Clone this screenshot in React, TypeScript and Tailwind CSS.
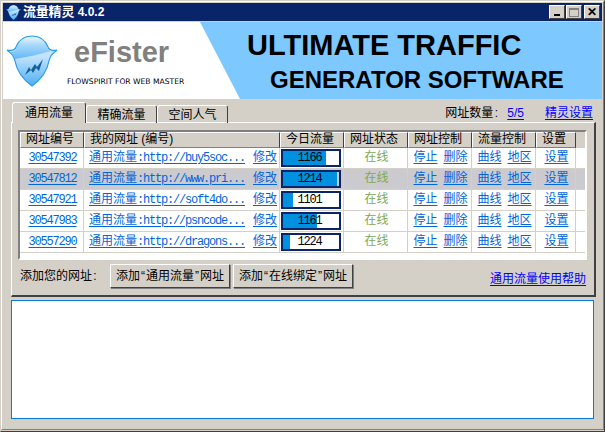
import React from 'react'

const cjk = "font-['Liberation_Sans','Noto_Sans_CJK_SC',sans-serif]"
const mono = "font-['Liberation_Mono','Noto_Sans_CJK_SC',monospace] text-[12px] tracking-[-1.2px]"
const grid = 'grid grid-cols-[64px_196px_64px_64px_64px_64px_40px_1fr]'

const rows = [
  { id: '30547392', url: 'http://buy5soc...', today: 1166, fill: 43, on: false },
  { id: '30547812', url: 'http://www.pri...', today: 1214, fill: 54, on: true },
  { id: '30547921', url: 'http://soft4do...', today: 1101, fill: 10, on: false },
  { id: '30547983', url: 'http://psncode...', today: 1161, fill: 34, on: false },
  { id: '30557290', url: 'http://dragons...', today: 1224, fill: 7, on: false },
]
const headers = ['网址编号', '我的网址 (编号)', '今日流量', '网址状态', '网址控制', '流量控制', '设置']

function Logo({ size, id }: { size: number; id: string }) {
  return (
    <svg width={size} height={size} viewBox="0 0 52 52">
      <defs>
        <linearGradient id={`${id}-top`} x1="0" y1="0" x2="0" y2="1">
          <stop offset="0" stopColor="#e8f5ff" />
          <stop offset="0.35" stopColor="#a9d9fc" />
          <stop offset="1" stopColor="#62b8f8" />
        </linearGradient>
        <linearGradient id={`${id}-low`} x1="0" y1="0" x2="0" y2="1">
          <stop offset="0.4" stopColor="#c4e4fd" />
          <stop offset="1" stopColor="#4eaef3" />
        </linearGradient>
      </defs>
      <path
        d="M1 15 C6 16 9 15 10 12 C13 4 19 1 26 1 C33 1 39 4 42 12 C43 15 46 16 51 15 C46 19 44 21 43 26 C41 37 33 46 26 51 C19 46 11 37 9 26 C8 21 6 19 1 15 Z"
        fill={`url(#${id}-low)`}
        stroke="#2a9bee"
        strokeWidth="1.2"
      />
      <path d="M9 24 C8 21 7 19 4 17 C7 17 10 16 11 12 C14 5 19 2 26 2 C33 2 38 5 41 12 C42 14 43 15 45 16 C34 19 22 22 9 24 Z" fill={`url(#${id}-top)`} />
      <path d="M19 40 L23 32 L25 35 L29 29 L31 32 L37 24 L33 36 L30 33 L27 38 L25 35 Z" fill="#14609e" />
    </svg>
  )
}

function Caption({ glyph }: { glyph: React.ReactNode }) {
  return (
    <div className="w-[16px] h-[14px] bg-[#d4d0c8] border border-white border-r-[#404040] border-b-[#404040] flex items-center justify-center text-black">
      {glyph}
    </div>
  )
}

function Bar({ value, fill }: { value: number; fill: number }) {
  return (
    <div className="relative w-[60px] h-[18px] border-2 border-[#0a246a]">
      <div className="h-full bg-[#0090e0]" style={{ width: fill }} />
      <span className={`absolute inset-0 flex items-center justify-center pr-[3px] text-black ${mono}`}>{value}</span>
    </div>
  )
}

function Cell({ children, className = '' }: { children?: React.ReactNode; className?: string }) {
  return <div className={`h-[20px] flex items-center border-r border-[#d4d0c8] ${className}`}>{children}</div>
}

function L({ children }: { children: React.ReactNode }) {
  return <a className="text-[#0066dd] underline underline-offset-2">{children}</a>
}

function Quote({ children }: { children: React.ReactNode }) {
  return <span className="inline-block w-[6px] text-center">{children}</span>
}

function Button({ children }: { children: React.ReactNode }) {
  return (
    <button className="w-[120px] h-[24px] bg-[#d4d0c8] border border-white border-r-[#404040] border-b-[#404040] shadow-[1px_1px_0_#808080] text-[12px] text-black whitespace-nowrap">
      {children}
    </button>
  )
}

export default function App() {
  return (
    <div className={`w-[605px] h-[432px] overflow-hidden bg-[#d4d0c8] ${cjk} text-[12px] text-black`}>
      <div className="h-full border border-[#d4d0c8] border-r-[#404040] border-b-[#404040]">
        <div className="h-[429px] border border-white border-r-[#808080] border-b-[#808080] p-px">
          {/* 타이틀바 */}
          <div className="h-[18px] bg-[#0a246a] flex items-center justify-between pl-[3px] pr-[2px]">
            <div className="flex items-center gap-[2px]">
              <Logo size={15} id="small" />
              <span className="text-white font-bold text-[13px] tracking-[-0.2px]">
                流量精灵 <span className="text-[12px] tracking-normal">4.0.2</span>
              </span>
            </div>
            <div className="flex items-center">
              <Caption glyph={<div className="w-[6px] h-[2px] bg-black mt-[6px]" />} />
              <div className="w-px" />
              <Caption glyph={<div className="w-[10px] h-[9px] border border-[#808080] border-t-2" />} />
              <div className="w-[2px]" />
              <Caption glyph={<span className="text-[12px] font-bold leading-none">✕</span>} />
            </div>
          </div>

          {/* 배너 */}
          <div className="relative mt-px h-[77px] bg-white flex overflow-hidden">
            <div className="absolute inset-0 bg-[#7dc8ff] [clip-path:polygon(197px_0,100%_0,100%_100%,237px_100%)]" />
            <div className="relative w-[244px] flex items-start">
              <div className="ml-[3px] mt-[13px]">
                <Logo size={52} id="large" />
              </div>
              <div className="ml-[16px] mt-[13px] flex flex-col">
                <span className="font-['Liberation_Sans'] font-bold text-[29px] leading-[34px] text-[#808080]">eFister</span>
                <span className="-ml-[7px] mt-[8px] font-['DejaVu_Sans'] text-[7.6px] leading-[10px] whitespace-nowrap">
                  FLOWSPIRIT FOR WEB MASTER
                </span>
              </div>
            </div>
            <div className="relative flex flex-col font-['Liberation_Sans'] font-bold text-black whitespace-nowrap">
              <span className="mt-[5px] text-[29px] leading-[36px]">ULTIMATE TRAFFIC</span>
              <span className="ml-[23px] mt-[2px] text-[24px] leading-[30px]">GENERATOR SOFTWARE</span>
            </div>
          </div>

          <div className="pl-[8px] pt-[3px]">
            {/* 탭 */}
            <div className="w-[585px] h-[21px] flex items-end pl-px relative z-10">
              <div className="w-[74px] h-[21px] bg-[#d4d0c8] border border-white border-r-[#404040] border-b-0 rounded-t-[3px] flex items-center justify-center">通用流量</div>
              <div className="w-[71px] h-[18px] border border-white border-r-[#404040] border-b-0 rounded-t-[3px] flex items-center justify-center">精确流量</div>
              <div className="w-[71px] h-[18px] border border-white border-r-[#404040] border-b-0 rounded-t-[3px] flex items-center justify-center">空间人气</div>
              <div className="ml-auto flex items-center h-[21px] pr-[3px]">
                <span>网址数量<Quote>:</Quote></span>
                <a className="ml-[8px] text-[#0000ff] underline underline-offset-2">5/5</a>
                <a className="ml-[21px] text-[#0000ff] underline underline-offset-2">精灵设置</a>
              </div>
            </div>

            {/* 메인 패널 */}
            <div className="w-[585px] h-[175px] -mt-px border border-white border-r-[#404040] border-b-[#404040] border-r-2 border-b-2 px-[6px] pt-[7px]">
              <div className="w-[569px] h-[130px] border-2 border-[#808080] border-r-white border-b-white bg-white overflow-hidden">
                <div className={`${grid} h-[16px] bg-[#d4d0c8]`}>
                  {headers.map((h) => (
                    <div key={h} className="border border-white border-r-[#404040] border-b-[#808080] flex items-center pl-[5px] pb-[2px] whitespace-nowrap leading-none">
                      {h}
                    </div>
                  ))}
                  <div />
                </div>
                {rows.map((r) => (
                  <div key={r.id} className={`${grid} border-b border-[#d4d0c8] ${r.on ? 'bg-[#cbcacf]' : 'bg-white'}`}>
                    <Cell className="justify-center pl-[2px] pb-[2px]">
                      <L>
                        <span className={mono}>{r.id}</span>
                      </L>
                    </Cell>
                    <Cell className="justify-between pl-[5px] pr-[2px] pb-[2px] whitespace-nowrap">
                      <L>
                        通用流量<span className={mono}>:{r.url}</span>
                      </L>
                      <L>修改</L>
                    </Cell>
                    <Cell className="pl-px">
                      <Bar value={r.today} fill={r.fill} />
                    </Cell>
                    <Cell className="justify-center pl-[2px] pb-[2px] text-[#80a850]">在线</Cell>
                    <Cell className="justify-center gap-[6px] pl-[2px] pb-[2px]">
                      <L>停止</L>
                      <L>删除</L>
                    </Cell>
                    <Cell className="justify-center gap-[6px] pl-[2px] pb-[2px]">
                      <L>曲线</L>
                      <L>地区</L>
                    </Cell>
                    <Cell className="justify-center pl-[2px] pb-[2px]">
                      <L>设置</L>
                    </Cell>
                    <Cell className="border-r-0" />
                  </div>
                ))}
              </div>
              <div className="flex items-center mt-[4px] pl-[2px] pr-[2px] h-[24px]">
                <span className="w-[90px]">添加您的网址<Quote>:</Quote></span>
                <div className="flex gap-[3px]">
                  <Button>添加<Quote>“</Quote>通用流量<Quote>”</Quote>网址</Button>
                  <Button>添加<Quote>“</Quote>在线绑定<Quote>”</Quote>网址</Button>
                </div>
                <a className="ml-auto mt-[6px] text-[#0000ff] underline underline-offset-2">通用流量使用帮助</a>
              </div>
            </div>

            {/* 로그 */}
            <div className="w-[583px] h-[119px] mt-[3px] bg-white border border-[#0a78e6]" />
          </div>
        </div>
      </div>
    </div>
  )
}
